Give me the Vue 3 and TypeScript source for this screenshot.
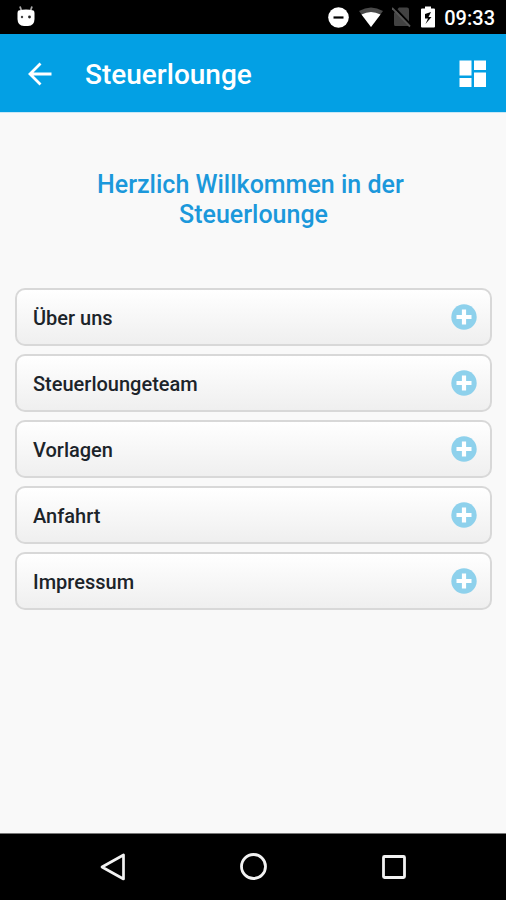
<script setup lang="ts">
interface Section {
  id: string
  label: string
}

const sections: Section[] = [
  { id: 'ueber-uns', label: 'Über uns' },
  { id: 'team', label: 'Steuerloungeteam' },
  { id: 'vorlagen', label: 'Vorlagen' },
  { id: 'anfahrt', label: 'Anfahrt' },
  { id: 'impressum', label: 'Impressum' },
]
</script>

<template>
  <div class="screen">
    <div class="status">
      <svg class="droid" viewBox="0 0 20 22" width="20" height="22" aria-hidden="true">
        <path d="M4 1.500 5.200 5M16 1.500 14.800 5" stroke="#aaa" stroke-width="1.800" />
        <path d="M2.500 5.500Q10 3.500 17.500 5.500Q18.500 6 18.500 8V14Q18.500 20.500 12 21H8Q1.500 20.500 1.500 14V8Q1.500 6 2.500 5.500Z" fill="#fff" />
        <circle cx="6" cy="12" r="1.200" fill="#444" />
        <circle cx="13.500" cy="12" r="1.400" fill="#222" />
      </svg>
      <div class="indicators">
        <svg viewBox="0 0 22 22" width="22" height="22" aria-hidden="true">
          <circle cx="10.500" cy="11.500" r="10.300" fill="#fff" />
          <path d="M5.500 11.500H15.500" stroke="#000" stroke-width="2.200" />
        </svg>
        <svg viewBox="0 0 26 22" width="26" height="22" aria-hidden="true">
          <path d="M1 5Q13-2 25 5L13 21Z" fill="#4a4a4a" />
          <path d="M3.500 8.500Q13 3.500 22.500 8.500L13 21Z" fill="#fff" />
        </svg>
        <svg viewBox="0 0 20 22" width="20" height="22" aria-hidden="true">
          <path d="M2 7 7 1.500H15Q17 1.500 17 3.500V20H3Q2 20 2 18Z" fill="#424242" />
          <path d="M1 0 19 19" stroke="#000" stroke-width="2" />
          <path d="M0 2 18 20.500" stroke="#555" stroke-width="1.800" />
        </svg>
        <svg viewBox="0 0 16 22" width="16" height="22" aria-hidden="true">
          <path d="M5 0.500H11V2.500H14Q15 2.500 15 3.500V20.500Q15 21.500 14 21.500H2Q1 21.500 1 20.500V3.500Q1 2.500 2 2.500H5Z" fill="#fff" />
          <path d="M11 6 5 8V12.500H8L5.500 18 11.500 11H8.500Z" fill="#000" />
        </svg>
        <time class="clock">09:33</time>
      </div>
    </div>

    <header class="bar">
      <button class="icon-button" type="button" aria-label="Zurück">
        <svg viewBox="0 0 24 24" width="24" height="24" aria-hidden="true">
          <path d="M12.500 1.500 2 12 12.500 22.500M2 12H23.500" fill="none" stroke="#fff" stroke-width="2.800" />
        </svg>
      </button>
      <h1 class="title">Steuerlounge</h1>
      <button class="icon-button" type="button" aria-label="Übersicht">
        <svg viewBox="0 0 28 28" width="28" height="28" aria-hidden="true">
          <path d="M0.500 0.500H12.500V15.500H0.500ZM15 0.500H27V10H15ZM0.500 18H12.500V27H0.500ZM15 12.500H27V27H15Z" fill="#fff" />
        </svg>
      </button>
    </header>

    <main class="content">
      <h2 class="welcome">Herzlich Willkommen in der&nbsp;<br />Steuerlounge</h2>
      <ul class="list">
        <li v-for="section in sections" :key="section.id">
          <button class="card" type="button">
            <span class="label">{{ section.label }}</span>
            <svg viewBox="0 0 26 26" width="26" height="26" aria-hidden="true">
              <circle cx="13" cy="13" r="12.700" fill="#8ed1ec" />
              <path d="M13 5.500V20.500M5.500 13H20.500" stroke="#fff" stroke-width="4.200" />
            </svg>
          </button>
        </li>
      </ul>
    </main>

    <nav class="system" aria-label="Systemnavigation">
      <button class="key" type="button" aria-label="Zurück">
        <svg viewBox="0 0 28 28" width="28" height="28" aria-hidden="true">
          <path d="M24.500 2V26L3 14Z" fill="none" stroke="#f2f2f2" stroke-width="2.700" stroke-linejoin="round" />
        </svg>
      </button>
      <button class="key" type="button" aria-label="Startseite">
        <svg viewBox="0 0 28 28" width="28" height="28" aria-hidden="true">
          <circle cx="14.500" cy="13.500" r="12" fill="none" stroke="#f2f2f2" stroke-width="2.800" />
        </svg>
      </button>
      <button class="key" type="button" aria-label="Letzte Apps">
        <svg viewBox="0 0 28 28" width="28" height="28" aria-hidden="true">
          <rect x="4.500" y="3.500" width="21" height="21" rx="1" fill="none" stroke="#f2f2f2" stroke-width="2.800" />
        </svg>
      </button>
    </nav>
  </div>
</template>

<style>
body {
  margin: 0;
}
</style>

<style scoped>
.screen {
  display: flex;
  flex-direction: column;
  min-height: 100vh;
  background: #f9f9f9;
  font-family: Roboto, "Liberation Sans", sans-serif;
  font-weight: 500;
}

svg {
  display: block;
  flex: none;
}

button {
  border: 0;
  padding: 0;
  background: none;
  font: inherit;
  color: inherit;
  cursor: pointer;
}

.status {
  display: flex;
  align-items: center;
  justify-content: space-between;
  height: 34px;
  padding: 0 11px 0 16px;
  background: #000;
  color: #fff;
}

.droid {
  margin-bottom: 2px;
}

.indicators {
  display: flex;
  align-items: center;
  gap: 8px;
}

.clock {
  padding-top: 2px;
  font-size: 20px;
  line-height: 24px;
}

.bar {
  display: flex;
  align-items: center;
  box-sizing: border-box;
  height: 79px;
  padding: 2px 19px 0 28px;
  background: #03a0e4;
  border-bottom: 1px solid #c9e8f6;
  color: #fff;
}

.title {
  flex: 1;
  margin: 0;
  padding: 2px 0 0 33px;
  font-size: 28px;
  font-weight: 500;
  line-height: 36px;
}

.content {
  flex: 1;
  padding: 57px 14px 24px 15px;
}

.welcome {
  margin: 0 0 58px;
  color: #1b98db;
  font-size: 25px;
  font-weight: 500;
  line-height: 30px;
  text-align: center;
}

.list {
  display: grid;
  gap: 8px;
  margin: 0;
  padding: 0;
  list-style: none;
}

.card {
  display: flex;
  align-items: center;
  justify-content: space-between;
  box-sizing: border-box;
  width: 100%;
  height: 58px;
  padding: 0 13px 0 16px;
  border: 2px solid #d8d8d8;
  border-radius: 10px;
  background: linear-gradient(#fff, #efefef);
  color: #1c242a;
  font-size: 20px;
  line-height: 24px;
  text-align: left;
}

.label {
  padding-top: 2px;
}

.system {
  display: flex;
  align-items: center;
  justify-content: space-evenly;
  height: 66px;
  border-top: 1px solid #777;
  background: #000;
}

.key {
  display: flex;
  justify-content: center;
  width: 54px;
  padding: 10px 0;
}
</style>
